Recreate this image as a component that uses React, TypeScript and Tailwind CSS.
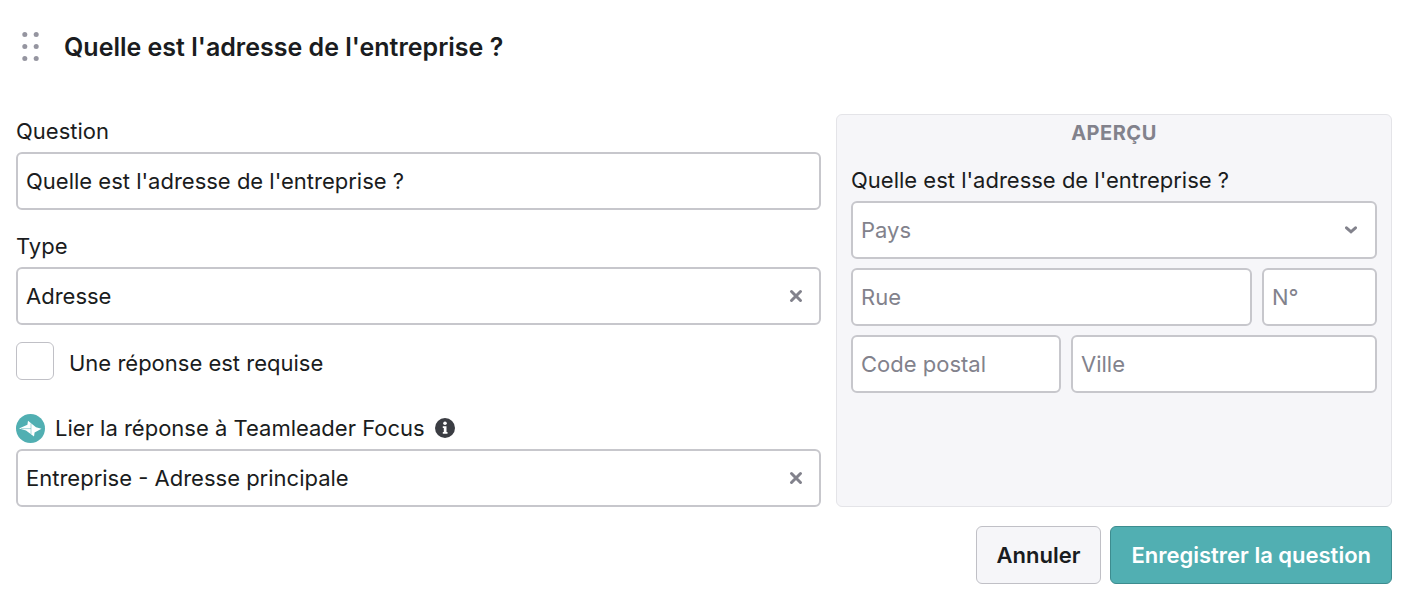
import { useState } from "react";
import clsx from "clsx";

const FIELD =
  "h-[58px] w-full min-w-0 rounded-md border-2 border-[#c7c7cc] bg-white px-2 text-[#1a1c20] placeholder:text-[#82828c] placeholder:opacity-100 outline-none";

export default function App() {
  const [question, setQuestion] = useState("Quelle est l'adresse de l'entreprise ?");
  const [type, setType] = useState("Adresse");
  const [required, setRequired] = useState(false);
  const [link, setLink] = useState("Entreprise - Adresse principale");

  return (
    <div className="bg-white px-4 pt-7 pb-4 font-['Inter',sans-serif] text-[22px] leading-[34px] text-[#1a1c20]">
      <header className="flex items-center gap-6 pl-1">
        <DragHandle />
        <h1 className="text-[25px] leading-[38px] font-semibold">{question}</h1>
      </header>

      <form onSubmit={(e) => e.preventDefault()}>
        <div className="mt-12 grid grid-cols-[805fr_556fr] gap-[15px]">
          {/* Settings */}
          <div className="flex min-w-0 flex-col">
            <label htmlFor="question">Question</label>
            <input
              id="question"
              type="text"
              value={question}
              onChange={(e) => setQuestion(e.target.value)}
              className={clsx(FIELD, "mt-1")}
            />

            <label htmlFor="type" className="mt-[19px]">
              Type
            </label>
            <ClearableSelect id="type" value={type} options={["Adresse"]} onChange={setType} />

            <div className="mt-[17px] flex items-end gap-[15px]">
              <input
                id="required"
                type="checkbox"
                checked={required}
                onChange={(e) => setRequired(e.target.checked)}
                className="size-[38px] appearance-none rounded-md border border-[#c0c0c6] bg-white checked:bg-[#51afb2]"
              />
              <label htmlFor="required">Une réponse est requise</label>
            </div>

            <div className="mt-[31px] flex items-center gap-[10px]">
              <FocusLogo />
              <label htmlFor="link">Lier la réponse à Teamleader Focus</label>
              <InfoIcon />
            </div>
            <ClearableSelect
              id="link"
              value={link}
              options={["Entreprise - Adresse principale"]}
              onChange={setLink}
            />
          </div>

          {/* Preview */}
          <section className="min-w-0 rounded-md border border-[#e4e4e8] bg-[#f6f6f9] px-[14px]">
            <h2 className="pt-1 text-center text-[20px] leading-7 font-bold tracking-wide text-[#82828c]">
              APERÇU
            </h2>
            <p className="mt-4">{question}</p>
            <div className="mt-1 flex flex-col gap-[9px]">
              <div className="relative">
                <select
                  aria-label="Pays"
                  defaultValue="Pays"
                  className={clsx(FIELD, "appearance-none text-[#82828c]!")}
                >
                  <option>Pays</option>
                </select>
                <svg
                  viewBox="0 0 12 8"
                  className="pointer-events-none absolute top-[25px] right-5 h-2 w-3"
                  fill="none"
                  stroke="#82828c"
                  strokeWidth="3"
                  strokeLinecap="round"
                >
                  <path d="M1.5 1.8 6 5.8l4.500-4" />
                </svg>
              </div>
              <div className="grid grid-cols-[401fr_115fr] gap-[10px]">
                <input type="text" aria-label="Rue" placeholder="Rue" className={FIELD} />
                <input type="text" aria-label="N°" placeholder="N°" className={FIELD} />
              </div>
              <div className="grid grid-cols-[210fr_306fr] gap-[10px]">
                <input type="text" aria-label="Code postal" placeholder="Code postal" className={FIELD} />
                <input type="text" aria-label="Ville" placeholder="Ville" className={FIELD} />
              </div>
            </div>
          </section>
        </div>

        <div className="mt-[19px] flex justify-end gap-[9px]">
          <button
            type="button"
            className="h-[58px] rounded-md border border-[#c0c0c6] bg-[#f6f6f9] px-5 font-semibold"
          >
            Annuler
          </button>
          <button
            type="submit"
            className="h-[58px] rounded-md border border-[#3d8c8f] bg-[#51afb2] px-5 font-semibold text-white"
          >
            Enregistrer la question
          </button>
        </div>
      </form>
    </div>
  );
}

type ClearableSelectProps = {
  id: string;
  value: string;
  options: string[];
  onChange: (value: string) => void;
};

function ClearableSelect({ id, value, options, onChange }: ClearableSelectProps) {
  return (
    <div className={clsx(FIELD, "mt-1 flex items-center")}>
      <select
        id={id}
        value={value}
        onChange={(e) => onChange(e.target.value)}
        className="h-full min-w-0 flex-1 appearance-none bg-transparent outline-none"
      >
        <option value=""></option>
        {options.map((option) => (
          <option key={option}>{option}</option>
        ))}
      </select>
      <button type="button" aria-label="Effacer" onClick={() => onChange("")} className="p-2">
        <svg
          viewBox="0 0 14 14"
          className="size-[14px]"
          fill="none"
          stroke="#82828c"
          strokeWidth="3"
          strokeLinecap="round"
        >
          <path d="M2.500 2.500l9 9M11.500 2.500l-9 9" />
        </svg>
      </button>
    </div>
  );
}

const DragHandle = () => (
  <svg viewBox="0 0 20 30" className="h-[30px] w-5" fill="#9595a0">
    {[2.5, 14.5, 26.5].map((y) => (
      <g key={y}>
        <circle cx="4.800" cy={y} r="2.500" />
        <circle cx="16.200" cy={y} r="2.500" />
      </g>
    ))}
  </svg>
);

const FocusLogo = () => (
  <svg viewBox="0 0 29 29" className="size-[29px]">
    <circle cx="14.500" cy="14.500" r="14.500" fill="#51afb2" />
    <path d="M3 14.500 11.400 10.800 12 6.800 20 13.200 25.500 14.700 18.600 18.600 18 22.600 10 16.500z" fill="#fff" />
    <path d="M5 14.600H15V9.400M15 14.600V20" fill="none" stroke="#51afb2" strokeWidth="0.500" />
  </svg>
);

const InfoIcon = () => (
  <svg viewBox="0 0 20 20" className="size-5">
    <circle cx="10" cy="10" r="10" fill="#3b3d43" />
    <circle cx="10" cy="5.200" r="1.800" fill="#fff" />
    <path d="M7.800 8.300h3.700v5.700h1v1.800H7.800V14h1v-3.900h-1z" fill="#fff" />
  </svg>
);
